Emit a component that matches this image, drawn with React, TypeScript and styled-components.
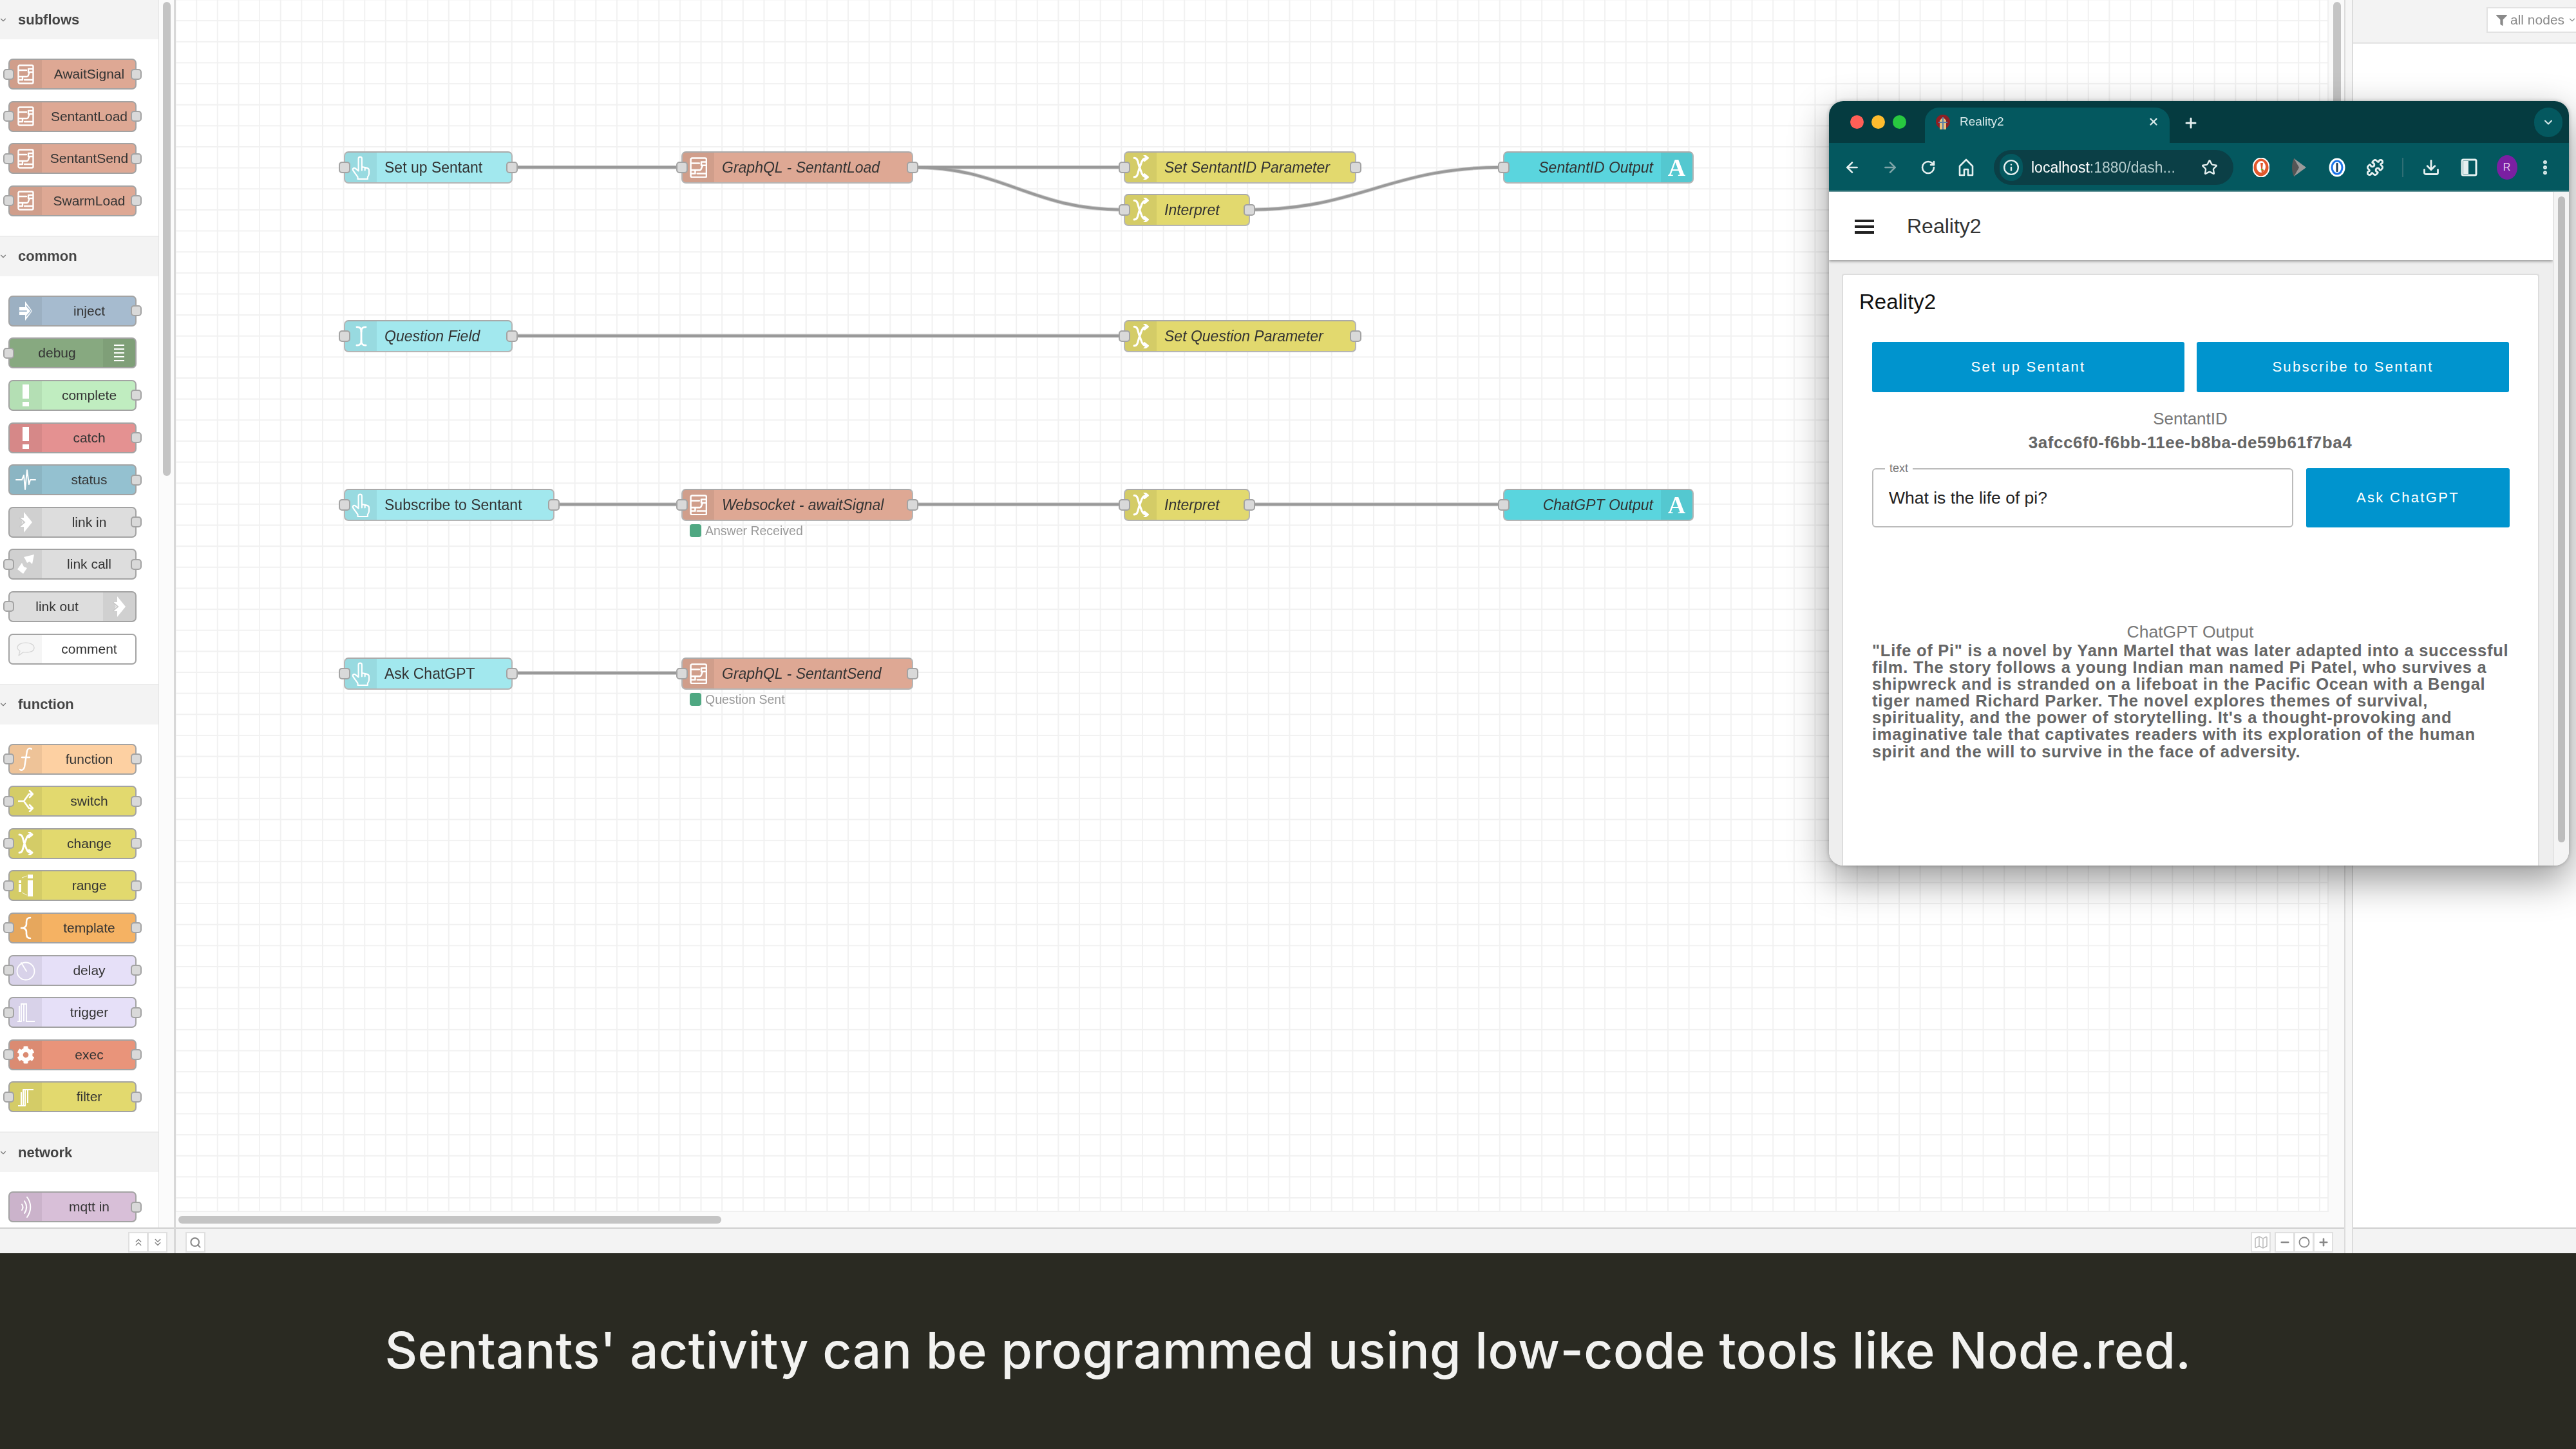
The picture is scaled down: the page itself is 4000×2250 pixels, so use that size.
import React from 'react';
import styled, { createGlobalStyle } from 'styled-components';
import { ArrowLeft, ArrowRight, RotateCw, Info, Star, Puzzle, Download, EllipsisVertical, ChevronDown, X, Plus, TextCursor, Search, ChevronsUp, ChevronsDown, Map as MapIcon, Minus, Circle } from 'lucide-react';
import { FaCog, FaFilter } from 'react-icons/fa';

const Global = createGlobalStyle`
  html, body { margin: 0; padding: 0; background: #2a2a22; }
  body { width: 4000px; height: 2250px; overflow: hidden; font-family: "Liberation Sans", Arial, sans-serif; }
  * { box-sizing: border-box; }
`;

const Root = styled.div`
  position: relative;
  width: 4000px;
  height: 2250px;
  display: flex;
  flex-direction: column;
  overflow: hidden;
  background: #2a2a22;
`;
const Screen = styled.div`
  height: 1946px;
  display: flex;
  background: #fff;
  overflow: hidden;
  filter: blur(0.6px);
`;

/* ---------- palette ---------- */
const Palette = styled.aside`
  width: 270px;
  flex: none;
  display: flex;
  flex-direction: column;
  background: #fff;
`;
const PaletteMain = styled.div`
  height: 1906px;
  display: flex;
  overflow: hidden;
`;
const PaletteList = styled.div`
  width: 247px;
  flex: none;
  margin-top: -2px;
  border-right: 1px solid #e4e4e4;
  overflow: hidden;
`;
const PaletteTrack = styled.div`
  flex: 1;
  background: #fbfbfb;
  padding: 3px 5px 0 6px;
`;
const PaletteThumb = styled.div`
  width: 12px;
  height: 736px;
  border-radius: 6px;
  background: #c4c4c4;
`;
const SectionHead = styled.div`
  height: 63px;
  border-top: 2px solid #ececec;
  background: #f3f3f3;
  display: flex;
  align-items: center;
  font-size: 22px;
  font-weight: 700;
  color: #444;
`;
const Caret = styled(ChevronDown)`
  width: 14px;
  height: 14px;
  margin: 0 16px 0 -2px;
  color: #777;
`;
const SectionBody = styled.div`
  padding: 30px 0 30px 13px;
  display: flex;
  flex-direction: column;
  gap: 17.6px;
`;
const PNode = styled.div<{ $c: string; $right?: boolean }>`
  position: relative;
  width: 199px;
  height: 48px;
  border: 2px solid #a3a3a3;
  border-radius: 7px;
  background: ${p => p.$c};
  display: flex;
  flex-direction: ${p => (p.$right ? 'row-reverse' : 'row')};
  align-items: stretch;
`;
const IconZone = styled.div<{ $w: number; $right?: boolean; $light?: boolean }>`
  width: ${p => p.$w}px;
  flex: none;
  display: flex;
  align-items: center;
  justify-content: center;
  background: ${p => (p.$light ? 'rgba(0,0,0,0.04)' : 'rgba(0,0,0,0.06)')};
  border-radius: ${p => (p.$right ? '0 5px 5px 0' : '5px 0 0 5px')};
`;
const PLabel = styled.div`
  flex: 1;
  display: flex;
  align-items: center;
  justify-content: center;
  padding-left: 2px;
  font-size: 21px;
  color: #333;
  white-space: nowrap;
`;
const Port = styled.span<{ $side: 'l' | 'r'; $size: number }>`
  position: absolute;
  top: 50%;
  ${p => (p.$side === 'l' ? 'left' : 'right')}: ${p => -Math.round(p.$size / 2) - 1}px;
  width: ${p => p.$size}px;
  height: ${p => p.$size}px;
  margin-top: ${p => -p.$size / 2}px;
  background: #d9d9d9;
  border: 2px solid #a3a3a3;
  border-radius: 5px;
`;
const BarButtons = styled.div`
  display: flex;
  & > button + button { margin-left: -1px; }
`;
const BarButton = styled.button<{ $w?: number }>`
  width: ${p => p.$w ?? 31}px;
  height: 32px;
  padding: 0;
  display: flex;
  align-items: center;
  justify-content: center;
  background: #fff;
  border: 2px solid #e0e0e0;
  color: #888;
`;
const Bar = styled.div`
  height: 40px;
  flex: none;
  border-top: 2px solid #cfcfcf;
  background: #f3f3f3;
  display: flex;
  align-items: flex-start;
  padding-top: 5px;
`;
const PaletteBar = styled(Bar)`
  justify-content: flex-end;
  padding-right: 10px;
`;

/* ---------- workspace ---------- */
const Split = styled.div`
  width: 3px;
  flex: none;
  background: #d8d8d8;
`;
const SplitWide = styled.div`
  width: 14px;
  flex: none;
  background: #f6f6f6;
  border-left: 2px solid #dcdcdc;
  border-right: 2px solid #dcdcdc;
`;
const Workspace = styled.main`
  width: 3367px;
  flex: none;
  display: flex;
  flex-direction: column;
`;
const WorkArea = styled.div`
  height: 1906px;
  display: flex;
  flex-direction: column;
  background: #fafafa;
`;
const WorkTop = styled.div`
  height: 1882px;
  display: flex;
`;
const Grid = styled.div`
  position: relative;
  width: 3343px;
  flex: none;
  background-color: #fff;
  border-right: 2px solid #f0f0f0;
  border-bottom: 2px solid #f0f0f0;
  background-image:
    linear-gradient(to right, #f1f1f1 2px, transparent 2px),
    linear-gradient(to bottom, #f1f1f1 2px, transparent 2px);
  background-size: 32.65px 32.65px;
  background-position: -1.5px -1.5px;
`;
const VTrack = styled.div`
  flex: 1;
  padding: 3px 0 0 7px;
`;
const VThumb = styled.div`
  width: 12px;
  height: 1100px;
  border-radius: 6px;
  background: #c4c4c4;
`;
const HTrack = styled.div`
  height: 24px;
  padding: 6px 0 0 4px;
`;
const HThumb = styled.div`
  width: 843px;
  height: 12px;
  border-radius: 6px;
  background: #c4c4c4;
`;
const WorkBar = styled(Bar)`
  padding-left: 15px;
  padding-right: 17px;
  gap: 6px;
`;
const Grow = styled.div`
  flex: 1;
`;
const Wires = styled.svg`
  position: absolute;
  left: 0;
  top: 0;
  width: 100%;
  height: 100%;
  pointer-events: none;
`;
const Wire = styled.path<{ $under?: boolean }>`
  fill: none;
  stroke: ${p => (p.$under ? '#cfcfcf' : '#999')};
  stroke-width: ${p => (p.$under ? 6 : 4)};
`;
const FNode = styled.div<{ $x: number; $y: number; $w: number; $c: string; $right?: boolean }>`
  position: absolute;
  left: ${p => p.$x - 273}px;
  top: ${p => p.$y - 25}px;
  width: ${p => p.$w}px;
  height: 50px;
  border: 2px solid #b5b5b5;
  border-top-color: #aaa;
  border-radius: 7px;
  background: ${p => p.$c};
  display: flex;
  flex-direction: ${p => (p.$right ? 'row-reverse' : 'row')};
`;
const FLabel = styled.div<{ $i?: boolean; $right?: boolean }>`
  flex: 1;
  display: flex;
  align-items: center;
  justify-content: ${p => (p.$right ? 'flex-end' : 'flex-start')};
  padding: 0 12px;
  font-size: 23px;
  font-style: ${p => (p.$i ? 'italic' : 'normal')};
  color: #333;
  white-space: nowrap;
`;
const NodeStatus = styled.div<{ $x: number; $y: number }>`
  position: absolute;
  left: ${p => p.$x - 273}px;
  top: ${p => p.$y}px;
  display: flex;
  align-items: center;
  gap: 6px;
  height: 20px;
  font-size: 19.5px;
  color: #999;
  white-space: nowrap;
`;
const StatusDot = styled.span`
  width: 18px;
  height: 20px;
  border-radius: 4px;
  background: #4fa882;
`;
const SerifA = styled.span`
  font-family: "Liberation Serif", serif;
  font-weight: 700;
  font-size: 38px;
  line-height: 1;
  color: #fff;
`;

/* ---------- right sidebar ---------- */
const Sidebar = styled.aside`
  flex: 1;
  display: flex;
  flex-direction: column;
  background: #fff;
  overflow: hidden;
`;
const SideHead = styled.div`
  height: 68px;
  flex: none;
  background: #f3f3f3;
  border-bottom: 3px solid #e8e8e8;
  padding: 11px 0 0 207px;
`;
const FilterBtn = styled.div`
  width: 170px;
  height: 40px;
  background: #fff;
  border: 2px solid #e2e2e2;
  display: flex;
  align-items: center;
  gap: 5px;
  padding-left: 13px;
  color: #8a8a8a;
  font-size: 21px;
  white-space: nowrap;
`;
const SideBody = styled.div`
  flex: 1;
`;

/* ---------- browser window ---------- */
const Browser = styled.section`
  position: absolute;
  left: 2840px;
  top: 157px;
  width: 1149px;
  height: 1187px;
  border-radius: 22px;
  overflow: hidden;
  display: flex;
  flex-direction: column;
  background: #fff;
  box-shadow: 0 22px 60px rgba(0, 0, 0, 0.42), 0 0 6px rgba(0, 0, 0, 0.25);
  filter: blur(0.5px);
`;
const TitleBar = styled.div`
  height: 65px;
  flex: none;
  background: #053b40;
  display: flex;
  align-items: flex-start;
  padding: 10px 10px 0 33px;
`;
const Lights = styled.div`
  display: flex;
  gap: 12px;
  margin: 12px 0 0 0;
  width: 116px;
  flex: none;
`;
const Light = styled.span<{ $c: string }>`
  width: 21px;
  height: 21px;
  border-radius: 50%;
  background: ${p => p.$c};
`;
const Tab = styled.div`
  width: 380px;
  height: 55px;
  flex: none;
  background: #04585f;
  border-radius: 22px 22px 0 0;
  display: flex;
  align-items: center;
  padding: 0 16px;
  color: #d8e9ea;
  font-size: 19px;
  padding-bottom: 12px;
`;
const TabTitle = styled.span`
  flex: 1;
  margin-left: 14px;
`;
const NewTab = styled(Plus)`
  margin: 12px 0 0 21px;
  color: #e6f0f0;
`;
const TabMenu = styled.div`
  width: 44px;
  height: 46px;
  border-radius: 22px;
  background: #04585f;
  display: flex;
  align-items: center;
  justify-content: center;
  color: #d8e9ea;
`;
const ToolBar = styled.div`
  height: 76px;
  flex: none;
  background: #04585f;
  border-bottom: 2px solid #6f9da1;
  display: flex;
  align-items: center;
  padding: 2px 0 0 22px;
  color: #e6f0f0;
`;
const ToolSlot = styled.div<{ $dim?: boolean }>`
  width: 59px;
  flex: none;
  display: flex;
  align-items: center;
  justify-content: center;
  color: ${p => (p.$dim ? '#7fa5a8' : '#e6f0f0')};
  &:first-child { width: 28px; margin-right: 15px; }
`;
const UrlPill = styled.div`
  width: 372px;
  height: 54px;
  flex: none;
  margin: 0 13px 0 14px;
  border-radius: 27px;
  background: #0b3f46;
  display: flex;
  align-items: center;
  padding: 0 24px 0 9px;
  font-size: 23px;
  white-space: nowrap;
`;
const UrlInfo = styled.div`
  width: 36px;
  height: 42px;
  border-radius: 21px;
  background: #04585f;
  display: flex;
  align-items: center;
  justify-content: center;
  margin-right: 13px;
  flex: none;
`;
const UrlHost = styled.span`
  color: #fff;
`;
const UrlRest = styled.span`
  color: #b4cccd;
  flex: 1;
`;
const ToolSep = styled.div`
  width: 2px;
  height: 30px;
  margin: 0 13px;
  background: #2f6e74;
  flex: none;
`;
const Avatar = styled.div`
  width: 32px;
  height: 38px;
  border-radius: 50%;
  background: #7b1fa2;
  color: #e6d0ee;
  font-size: 16px;
  display: flex;
  align-items: center;
  justify-content: center;
`;
const PageWrap = styled.div`
  flex: 1;
  display: flex;
  min-height: 0;
`;
const PageMain = styled.div`
  width: 1124px;
  flex: none;
  background: #eee;
  display: flex;
  flex-direction: column;
`;
const PageScroll = styled.div`
  flex: 1;
  padding: 7px 7px 36px 6px;
  background: #f4f4f4;
  border-left: 2px solid #e4e4e4;
`;
const PageThumb = styled.div`
  width: 11px;
  height: 100%;
  border-radius: 6px;
  background: #bdbdbd;
`;
const AppBar = styled.header`
  height: 106px;
  flex: none;
  background: #fff;
  box-shadow: 0 2px 4px rgba(0, 0, 0, 0.35);
  display: flex;
  align-items: center;
  padding: 1px 0 0 40px;
  font-size: 32px;
  color: #333;
  gap: 51px;
`;
const Burger = styled.div`
  width: 30px;
  height: 22px;
  border-top: 4px solid #222;
  border-bottom: 4px solid #222;
  position: relative;
  &::after {
    content: "";
    position: absolute;
    left: 0;
    right: 0;
    top: 5px;
    height: 4px;
    background: #222;
  }
`;
const Card = styled.div`
  flex: 1;
  margin: 21px 21px 0 20px;
  background: #fff;
  border: 2px solid #ddd;
  border-bottom: none;
  border-radius: 4px 4px 0 0;
  padding: 0 46px 0 45px;
  display: flex;
  flex-direction: column;
`;
const CardTitle = styled.div`
  height: 86px;
  margin-left: -20px;
  display: flex;
  align-items: center;
  padding-bottom: 2px;
  font-size: 33px;
  color: #111;
`;
const BtnRow = styled.div`
  display: grid;
  grid-template-columns: 485px 485px;
  gap: 19px;
  margin-top: 18px;
`;
const DashBtn = styled.div<{ $h: number }>`
  height: ${p => p.$h}px;
  background: #0094ce;
  border-radius: 3px;
  display: flex;
  align-items: center;
  justify-content: center;
  color: #fff;
  font-size: 22px;
  letter-spacing: 2.3px;
`;
const FieldLabel = styled.div`
  text-align: center;
  font-size: 26px;
  color: #777;
  line-height: 30px;
`;
const IdLabel = styled(FieldLabel)`
  margin-top: 26px;
`;
const IdValue = styled.div`
  text-align: center;
  font-size: 26px;
  font-weight: 700;
  letter-spacing: 0.55px;
  color: #666;
  line-height: 30px;
  margin-top: 7px;
`;
const InputRow = styled.div`
  display: grid;
  grid-template-columns: 654px 316px;
  gap: 20px;
  margin-top: 25px;
`;
const InputBox = styled.div`
  position: relative;
  height: 92px;
  border: 2px solid #bbb;
  border-radius: 6px;
  display: flex;
  align-items: center;
  padding-left: 24px;
  font-size: 26.5px;
  color: #222;
`;
const InputLegend = styled.span`
  position: absolute;
  left: 18px;
  top: -13px;
  padding: 0 7px;
  background: #fff;
  font-size: 18px;
  line-height: 22px;
  color: #777;
`;
const OutLabel = styled(FieldLabel)`
  margin-top: 147px;
  font-size: 26.5px;
`;
const Para = styled.div`
  font-size: 25.5px;
  font-weight: 700;
  color: #666;
  line-height: 26.1px;
  margin-top: 1px;
  white-space: nowrap;
  letter-spacing: 0.73px;
`;
const ParaLine = styled.div``;

/* ---------- caption ---------- */
const Caption = styled.footer`
  flex: 1;
  display: flex;
  align-items: center;
  justify-content: center;
  padding-bottom: 3px;
  font-family: Inter, "Open Sans", sans-serif;
  font-size: 78.5px;
  font-weight: 500;
  letter-spacing: 0.4px;
  color: #f2f2f0;
  white-space: nowrap;
`;

/* ---------- icons ---------- */
const Glyph = styled.svg<{ $w: number; $h: number }>`
  width: ${p => p.$w}px;
  height: ${p => p.$h}px;
  display: block;
`;
type IconName = 'subflow' | 'inject' | 'debug' | 'alert' | 'status' | 'linkin' | 'linkcall' | 'comment' | 'fn' | 'switch' | 'change' | 'range' | 'template' | 'delay' | 'trigger' | 'exec' | 'filter' | 'mqtt' | 'hand' | 'cursor' | 'A';

const Ico: React.FC<{ n: IconName; big?: boolean }> = ({ n, big }) => {
  const k = big ? 1.06 : 1;
  const S = (w: number, h: number, body: React.ReactNode, col = '#fff') => (
    <Glyph $w={w * k} $h={h * k} viewBox={`0 0 ${w} ${h}`} fill="none" stroke={col} strokeWidth={2.4} strokeLinecap="round" strokeLinejoin="round">
      {body}
    </Glyph>
  );
  switch (n) {
    case 'subflow':
      return S(26, 31, <>
        <rect x="1.5" y="1.5" width="23" height="28" rx="2" />
        <path d="M2 9h12M17 7h7M17 12h7M17 7v5M8 19h7c3 0 2-7 5-7M8 19v5M2 19h6M2 24h6M11 24h13" />
      </>);
    case 'inject':
      return S(22, 34, <>
        <path d="M1 11h9V2l11 15-11 15v-9H1z" fill="#fff" stroke="none" />
        <path d="M0 17h12" stroke="#a6bbcf" strokeWidth={2} />
        <path d="M12 9l7 8-7 8" stroke="#a6bbcf" strokeWidth={1.5} />
      </>);
    case 'debug':
      return S(18, 28, <path d="M1 2h16M1 8h16M1 14h16M1 20h16M1 26h16" strokeWidth={2.2} strokeLinecap="butt" />);
    case 'alert':
      return (
        <Glyph $w={10} $h={34} viewBox="0 0 10 34">
          <path d="M0 0h10v22H0zM0 27h10v7H0z" fill="#fff" />
        </Glyph>
      );
    case 'status':
      return S(32, 34, <path d="M1 17h9l3-7 2 22 3-30 3 22 2-7h8" strokeWidth={2} />);
    case 'linkin':
      return (
        <Glyph $w={20} $h={34} viewBox="0 0 20 34">
          <path d="M7 1l13 16L7 33v-9H1l4-7-4-7h6z" fill="#fff" />
          <path d="M0 10l8 7-8 7" fill="none" stroke="#c9c9c9" strokeWidth="2" />
        </Glyph>
      );
    case 'linkcall':
      return (
        <Glyph $w={28} $h={32} viewBox="0 0 28 32">
          <path d="M11 5l16-4-3 15-4-4-4 2-3-6z" fill="#fff" />
          <path d="M1 24l7-10 3 6 5 2-6 9z" fill="#fff" />
        </Glyph>
      );
    case 'comment':
      return S(28, 24, <path d="M14 2c7 0 13 3 13 8s-6 7-13 7c-1 0-3 0-4-.3L3 22l2-7C3 13.500 1 12 1 10c0-5 6-8 13-8z" strokeWidth={1.2} />, '#d4d4d4');
    case 'fn':
      return S(20, 38, <path d="M19 3c-3-2-6-1-7 3l-4 25c-1 4-4 6-7 4M4 16h12" strokeWidth={2.4} />);
    case 'switch':
      return S(24, 34, <path d="M1 17h8l8-11h5M9 17l8 11h5M18 1l5 5-5 5M18 23l5 5-5 5" strokeWidth={2.6} />);
    case 'change':
      return S(24, 36, <path d="M2 4c6 0 5 7 8 14s3 14 11 14M2 32c6 0 5-7 8-14s3-14 11-14M17 0l5 4-5 4M17 28l5 4-5 4" strokeWidth={3} />);
    case 'range':
      return (
        <Glyph $w={22} $h={34} viewBox="0 0 22 34">
          <path d="M14 0h8v6h-8zM14 9h8v25h-8zM0 9h4v4H0zM0 15h4v12H0z" fill="#fff" />
          <path d="M5 5l8-3M5 28l8 4" stroke="#fff" strokeWidth="0.8" />
        </Glyph>
      );
    case 'template':
      return S(18, 36, <path d="M16 2c-5 0-6 3-6 7v3c0 4-2 6-8 6 6 0 8 2 8 6v3c0 4 1 7 6 7" strokeWidth={2.6} />);
    case 'delay':
      return S(30, 32, <><circle cx="15" cy="17" r="13.500" strokeWidth={1.8} /><path d="M8 4l8 13" strokeWidth={1.8} /></>);
    case 'trigger':
      return S(30, 32, <path d="M2 30h6V3h8v27h13M5 30V6M12 3v27" strokeWidth={1.8} strokeLinejoin="miter" strokeLinecap="butt" />);
    case 'exec':
      return <FaCog size={28 * k} color="#fff" />;
    case 'filter':
      return S(26, 30, <path d="M1 29h8V4h16M6 29V8M12 4v25h-3M16 4v21" strokeWidth={2} strokeLinecap="butt" />);
    case 'mqtt':
      return S(18, 36, <path d="M3 14c2 3 2 6 0 9M7 9c4 6 4 13 0 19M11 3c7 9 7 21 0 31" strokeWidth={2} />);
    case 'hand':
      return S(27, 36, <path d="M10 23V5a2.500 2.500 0 0 1 5 0v12l7 1.500c2 .5 3.500 1.500 3.500 3.500v5c0 2-.5 3-2 5v3H9v-3c-2-3-6-8-7-10-1-2 1-4 3-3l5 4M15 17v5M19.500 18v4" strokeWidth={2} />);
    case 'cursor':
      return <TextCursor size={34} strokeWidth={2} color="#fff" />;
    case 'A':
      return <SerifA>A</SerifA>;
  }
};

type P = { label: string; c: string; icon: IconName; l?: boolean; r?: boolean; right?: boolean; pale?: boolean };
const PaletteItem: React.FC<P> = ({ label, c, icon, l = true, r = true, right, pale }) => (
  <PNode $c={c} $right={right}>
    <IconZone $w={50} $right={right} $light={pale}><Ico n={icon} /></IconZone>
    <PLabel>{label}</PLabel>
    {l && <Port $side="l" $size={17} />}
    {r && <Port $side="r" $size={17} />}
  </PNode>
);

const sections: { title: string; items: P[] }[] = [
  {
    title: 'subflows',
    items: ['AwaitSignal', 'SentantLoad', 'SentantSend', 'SwarmLoad'].map(label => ({ label, c: '#dea894', icon: 'subflow' as IconName })),
  },
  {
    title: 'common',
    items: [
      { label: 'inject', c: '#a6bbcf', icon: 'inject', l: false },
      { label: 'debug', c: '#87a980', icon: 'debug', r: false, right: true },
      { label: 'complete', c: '#c0edc0', icon: 'alert', l: false },
      { label: 'catch', c: '#e49191', icon: 'alert', l: false },
      { label: 'status', c: '#94c1d0', icon: 'status', l: false },
      { label: 'link in', c: '#dddddd', icon: 'linkin', l: false },
      { label: 'link call', c: '#dddddd', icon: 'linkcall' },
      { label: 'link out', c: '#dddddd', icon: 'linkin', r: false, right: true },
      { label: 'comment', c: '#ffffff', icon: 'comment', l: false, r: false, pale: true },
    ],
  },
  {
    title: 'function',
    items: [
      { label: 'function', c: '#fdd0a2', icon: 'fn' },
      { label: 'switch', c: '#e2d96e', icon: 'switch' },
      { label: 'change', c: '#e2d96e', icon: 'change' },
      { label: 'range', c: '#e2d96e', icon: 'range' },
      { label: 'template', c: '#f5b263', icon: 'template' },
      { label: 'delay', c: '#e6e0f8', icon: 'delay' },
      { label: 'trigger', c: '#e6e0f8', icon: 'trigger' },
      { label: 'exec', c: '#e9947a', icon: 'exec' },
      { label: 'filter', c: '#e2d96e', icon: 'filter' },
    ],
  },
  { title: 'network', items: [{ label: 'mqtt in', c: '#d8bfd8', icon: 'mqtt', l: false }] },
];

type F = { x: number; y: number; w: number; c: string; label: string; icon: IconName; i?: boolean; l?: boolean; r?: boolean; right?: boolean };
const BTN = '#a2e8ee';
const SUB = '#dea894';
const YEL = '#e2d96e';
const OUT = '#5ad5de';
const flow: F[] = [
  { x: 534, y: 260, w: 262, c: BTN, label: 'Set up Sentant', icon: 'hand' },
  { x: 1058, y: 260, w: 360, c: SUB, label: 'GraphQL - SentantLoad', icon: 'subflow', i: true },
  { x: 1745, y: 260, w: 361, c: YEL, label: 'Set SentantID Parameter', icon: 'change', i: true },
  { x: 1745, y: 326, w: 196, c: YEL, label: 'Interpret', icon: 'change', i: true },
  { x: 2334, y: 260, w: 296, c: OUT, label: 'SentantID Output', icon: 'A', i: true, r: false, right: true },
  { x: 534, y: 522, w: 262, c: BTN, label: 'Question Field', icon: 'cursor', i: true },
  { x: 1745, y: 522, w: 361, c: YEL, label: 'Set Question Parameter', icon: 'change', i: true },
  { x: 534, y: 784, w: 327, c: BTN, label: 'Subscribe to Sentant', icon: 'hand' },
  { x: 1058, y: 784, w: 360, c: SUB, label: 'Websocket - awaitSignal', icon: 'subflow', i: true },
  { x: 1745, y: 784, w: 196, c: YEL, label: 'Interpret', icon: 'change', i: true },
  { x: 2334, y: 784, w: 296, c: OUT, label: 'ChatGPT Output', icon: 'A', i: true, r: false, right: true },
  { x: 534, y: 1046, w: 262, c: BTN, label: 'Ask ChatGPT', icon: 'hand' },
  { x: 1058, y: 1046, w: 360, c: SUB, label: 'GraphQL - SentantSend', icon: 'subflow', i: true },
];
const wires = [
  'M796 260H1058',
  'M1418 260H1745',
  'M1418 260C1560 260 1600 326 1745 326',
  'M1941 326C2110 326 2160 260 2334 260',
  'M796 522H1745',
  'M861 784H1058',
  'M1418 784H1745',
  'M1941 784H2334',
  'M796 1046H1058',
];

const para = [
  '"Life of Pi" is a novel by Yann Martel that was later adapted into a successful',
  'film. The story follows a young Indian man named Pi Patel, who survives a',
  'shipwreck and is stranded on a lifeboat in the Pacific Ocean with a Bengal',
  'tiger named Richard Parker. The novel explores themes of survival,',
  "spirituality, and the power of storytelling. It's a thought-provoking and",
  'imaginative tale that captivates readers with its exploration of the human',
  'spirit and the will to survive in the face of adversity.',
];

export default function App() {
  return (
    <Root>
      <Global />
      <Screen>
        <Palette>
          <PaletteMain>
            <PaletteList>
              {sections.map(s => (
                <React.Fragment key={s.title}>
                  <SectionHead><Caret />{s.title}</SectionHead>
                  <SectionBody>
                    {s.items.map(it => <PaletteItem key={it.label} {...it} />)}
                  </SectionBody>
                </React.Fragment>
              ))}
            </PaletteList>
            <PaletteTrack><PaletteThumb /></PaletteTrack>
          </PaletteMain>
          <PaletteBar>
            <BarButtons>
              <BarButton><ChevronsUp size={18} /></BarButton>
              <BarButton><ChevronsDown size={18} /></BarButton>
            </BarButtons>
          </PaletteBar>
        </Palette>
        <Split />
        <Workspace>
          <WorkArea>
            <WorkTop>
              <Grid>
                <Wires viewBox="273 0 3343 1882" preserveAspectRatio="none">
                  {wires.map(d => <Wire key={d} d={d} $under />)}
                  {wires.map(d => <Wire key={d} d={d} />)}
                </Wires>
                {flow.map((n, i) => (
                  <FNode key={i} $x={n.x} $y={n.y} $w={n.w} $c={n.c} $right={n.right}>
                    <IconZone $w={49} $right={n.right}><Ico n={n.icon} big /></IconZone>
                    <FLabel $i={n.i} $right={n.right}>{n.label}</FLabel>
                    <Port $side="l" $size={18} />
                    {n.r !== false && <Port $side="r" $size={18} />}
                  </FNode>
                ))}
                <NodeStatus $x={1071} $y={814}><StatusDot />Answer Received</NodeStatus>
                <NodeStatus $x={1071} $y={1076}><StatusDot />Question Sent</NodeStatus>
              </Grid>
              <VTrack><VThumb /></VTrack>
            </WorkTop>
            <HTrack><HThumb /></HTrack>
          </WorkArea>
          <WorkBar>
            <BarButton><Search size={19} strokeWidth={2.6} /></BarButton>
            <Grow />
            <BarButton><MapIcon size={24} strokeWidth={1.5} color="#bbb" /></BarButton>
            <BarButtons>
              <BarButton><Minus size={18} strokeWidth={3.5} /></BarButton>
              <BarButton><Circle size={18} strokeWidth={2.5} /></BarButton>
              <BarButton><Plus size={18} strokeWidth={3.5} /></BarButton>
            </BarButtons>
          </WorkBar>
        </Workspace>
        <SplitWide />
        <Sidebar>
          <SideHead>
            <FilterBtn><FaFilter size={17} />all nodes<ChevronDown size={14} /></FilterBtn>
          </SideHead>
          <SideBody />
          <Bar />
        </Sidebar>
      </Screen>
      <Caption>Sentants' activity can be programmed using low-code tools like Node.red.</Caption>

      <Browser>
        <TitleBar>
          <Lights>
            <Light $c="#ff5f57" /><Light $c="#febc2e" /><Light $c="#28c840" />
          </Lights>
          <Tab>
            <svg width="24" height="26" viewBox="0 0 24 26">
              <circle cx="12" cy="13" r="11" fill="#8e1f24" />
              <path d="M7 25V11l5-5 5 5v14z" fill="#e7c27d" />
              <path d="M11 6h2v19h-2zM5 13h14v2H5z" fill="#5b7fa8" />
            </svg>
            <TabTitle>Reality2</TabTitle>
            <X size={18} strokeWidth={3} />
          </Tab>
          <NewTab size={24} strokeWidth={3} />
          <Grow />
          <TabMenu><ChevronDown size={20} strokeWidth={2.5} /></TabMenu>
        </TitleBar>
        <ToolBar>
          <ToolSlot><ArrowLeft size={26} strokeWidth={2.4} /></ToolSlot>
          <ToolSlot $dim><ArrowRight size={26} strokeWidth={2.4} /></ToolSlot>
          <ToolSlot><RotateCw size={24} strokeWidth={2.6} /></ToolSlot>
          <ToolSlot>
            <svg width="26" height="28" viewBox="0 0 26 28" fill="none" stroke="#e6f0f0" strokeWidth="2.6" strokeLinejoin="round">
              <path d="M3 12L13 2l10 10v14h-7v-9h-6v9H3z" />
            </svg>
          </ToolSlot>
          <UrlPill>
            <UrlInfo><Info size={26} strokeWidth={2.2} /></UrlInfo>
            <UrlHost>localhost</UrlHost><UrlRest>:1880/dash...</UrlRest>
            <Star size={26} strokeWidth={2.2} />
          </UrlPill>
          <ToolSlot>
            <svg width="26" height="30" viewBox="0 0 26 30">
              <ellipse cx="13" cy="15" rx="12.500" ry="14.500" fill="#e2582c" stroke="#fff" strokeWidth="2" />
              <ellipse cx="13" cy="14" rx="7" ry="9" fill="#fff" />
              <path d="M12 8h4l-1 9 3 3-4 4z" fill="#e2582c" />
              <path d="M12 17h5l-3 3z" fill="#6fbf3f" />
            </svg>
          </ToolSlot>
          <ToolSlot>
            <svg width="26" height="30" viewBox="0 0 26 30">
              <path d="M5 1l19 14L5 29z" fill="#9a9a9a" />
              <path d="M5 1c-4 8-4 20 0 28l8-14z" fill="#555" />
            </svg>
          </ToolSlot>
          <ToolSlot>
            <svg width="26" height="30" viewBox="0 0 26 30">
              <ellipse cx="13" cy="15" rx="12.500" ry="14.500" fill="#fff" />
              <ellipse cx="13" cy="15" rx="9.500" ry="11.500" fill="#1a73e8" />
              <ellipse cx="13" cy="15" rx="6.500" ry="8.500" fill="#fff" />
              <rect x="11.500" y="8" width="3" height="14" rx="1" fill="#1b3a57" />
            </svg>
          </ToolSlot>
          <ToolSlot><Puzzle size={28} strokeWidth={2.4} /></ToolSlot>
          <ToolSep />
          <ToolSlot><Download size={28} strokeWidth={2.4} /></ToolSlot>
          <ToolSlot>
            <svg width="26" height="28" viewBox="0 0 26 28" fill="none" stroke="#e6f0f0" strokeWidth="3">
              <rect x="2" y="2" width="22" height="24" rx="2" />
              <rect x="4" y="4" width="8" height="20" fill="#e6f0f0" stroke="none" />
            </svg>
          </ToolSlot>
          <ToolSlot><Avatar>R</Avatar></ToolSlot>
          <ToolSlot><EllipsisVertical size={28} strokeWidth={3} /></ToolSlot>
        </ToolBar>
        <PageWrap>
          <PageMain>
            <AppBar><Burger />Reality2</AppBar>
            <Card>
              <CardTitle>Reality2</CardTitle>
              <BtnRow>
                <DashBtn $h={78}>Set up Sentant</DashBtn>
                <DashBtn $h={78}>Subscribe to Sentant</DashBtn>
              </BtnRow>
              <IdLabel>SentantID</IdLabel>
              <IdValue>3afcc6f0-f6bb-11ee-b8ba-de59b61f7ba4</IdValue>
              <InputRow>
                <InputBox>
                  <InputLegend>text</InputLegend>
                  What is the life of pi?
                </InputBox>
                <DashBtn $h={92}>Ask ChatGPT</DashBtn>
              </InputRow>
              <OutLabel>ChatGPT Output</OutLabel>
              <Para>{para.map(l => <ParaLine key={l}>{l}</ParaLine>)}</Para>
            </Card>
          </PageMain>
          <PageScroll><PageThumb /></PageScroll>
        </PageWrap>
      </Browser>
    </Root>
  );
}
